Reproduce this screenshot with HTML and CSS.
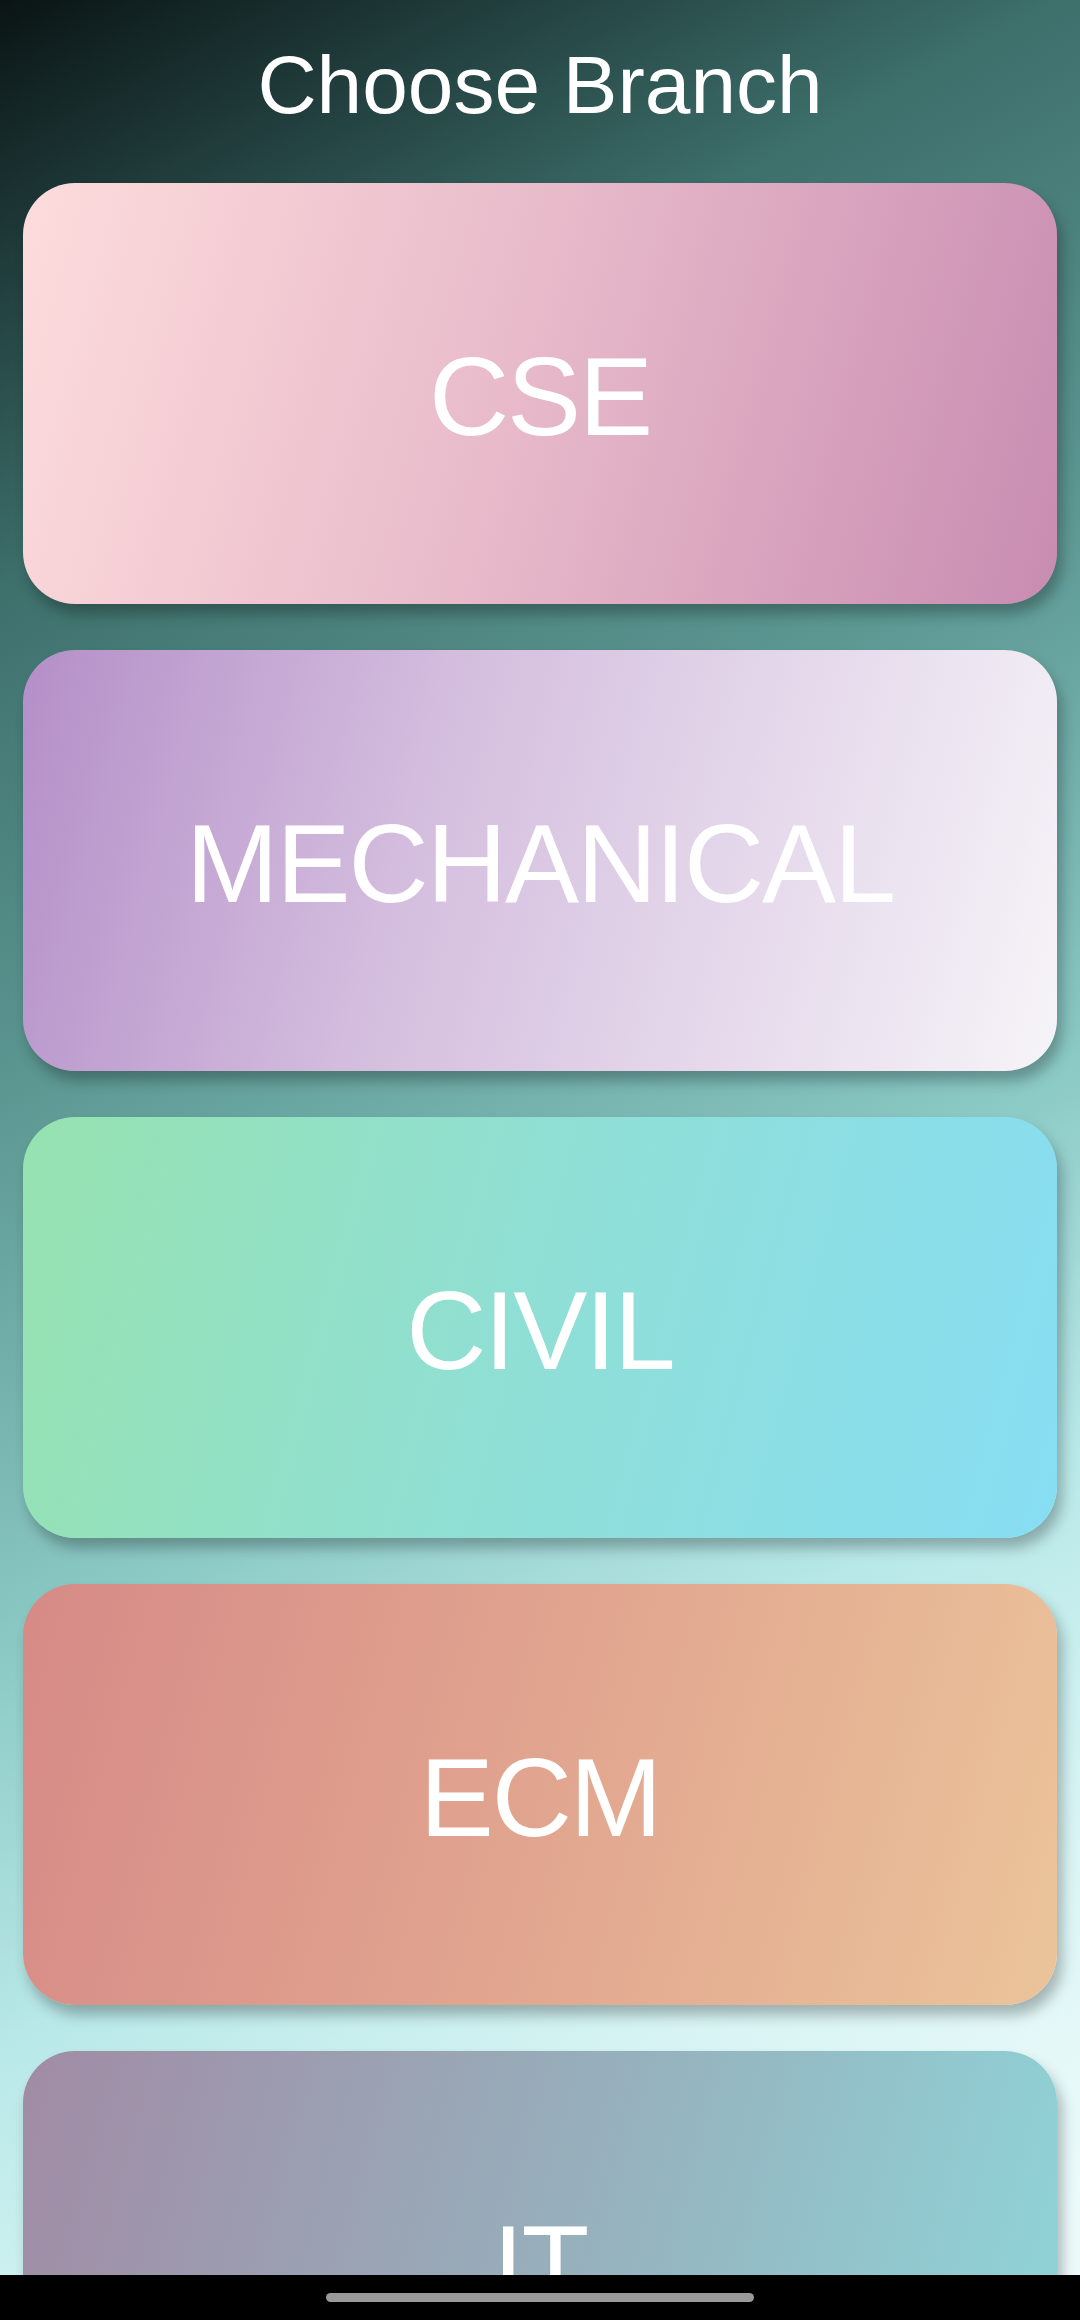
FILE: index.html
```html
<!DOCTYPE html>
<html lang="en">
<head>
<meta charset="utf-8">
<title>Choose Branch</title>
<link rel="stylesheet" href="styles.css">
</head>
<body>
<div class="screen">
  <header class="header">
    <h1 class="title">Choose Branch</h1>
  </header>
  <main class="list">
    <div class="card card-cse"><span class="label">CSE</span></div>
    <div class="card card-mech"><span class="label">MECHANICAL</span></div>
    <div class="card card-civil"><span class="label">CIVIL</span></div>
    <div class="card card-ecm"><span class="label">ECM</span></div>
    <div class="card card-it"><span class="label">IT</span></div>
  </main>
  <div class="navbar"><div class="home-pill"></div></div>
</div>
</body>
</html>
```
FILE: styles.css
```css
html, body {
  margin: 0;
  padding: 0;
}
body {
  font-family: "Liberation Sans", Arial, sans-serif;
}
.screen {
  position: relative;
  width: 1080px;
  height: 2320px;
  overflow: hidden;
  background: linear-gradient(151deg,
    #0a1414 0%,
    #22403f 10%,
    #3d6f6b 20%,
    #5d9893 38%,
    #8ccac6 57%,
    #b8e8e8 70%,
    #d6f3f3 82%,
    #e4f8f8 90%,
    #f0fbfb 100%);
}
.header {
  padding: 44px 0 57px;
  display: flex;
  justify-content: center;
}
.title {
  margin: 0;
  font-size: 82px;
  line-height: 82px;
  font-weight: 400;
  color: #ffffff;
}
.list {
  display: flex;
  flex-direction: column;
  gap: 46px;
  padding: 0 23px;
}
.card {
  height: 421px;
  box-sizing: border-box;
  padding-top: 7px;
  border-radius: 52px;
  display: flex;
  align-items: center;
  justify-content: center;
  box-shadow: 5px 10px 14px rgba(0, 0, 0, 0.28);
  flex-shrink: 0;
}
.label {
  color: #ffffff;
  font-size: 111px;
  line-height: 1;
  letter-spacing: -2px;
  font-weight: 400;
}
.card-cse {
  background: linear-gradient(105deg, #fddcdc 0%, #e9bccb 45%, #c88cb1 100%);
}
.card-mech {
  background: linear-gradient(105deg, #b48fc8 0%, #d5bfdf 40%, #f6f4f8 100%);
}
.card-civil {
  background: linear-gradient(105deg, #96e2b0 0%, #8fdfd6 50%, #87ddf3 100%);
}
.card-ecm {
  background: linear-gradient(105deg, #d68a87 0%, #e1a58f 50%, #ebc49a 100%);
}
.card-it {
  background: linear-gradient(105deg, #a18ba5 0%, #97aebb 50%, #8ed6d9 100%);
}
.navbar {
  position: absolute;
  left: 0;
  right: 0;
  bottom: 0;
  height: 45px;
  background: #000000;
  display: flex;
  justify-content: center;
  align-items: flex-start;
}
.home-pill {
  margin-top: 18px;
  width: 428px;
  height: 9px;
  border-radius: 5px;
  background: #9a9a9a;
}
```
